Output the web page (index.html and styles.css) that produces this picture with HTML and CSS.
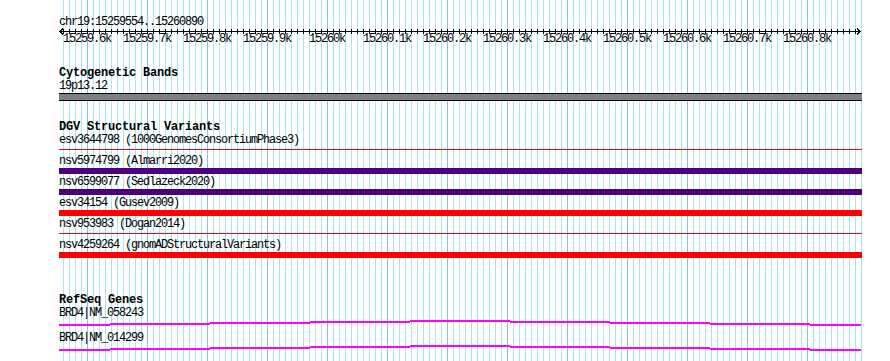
FILE: index.html
```html
<!DOCTYPE html>
<html>
<head>
  <title>chr19:15259554..15260890</title>
  <link rel="stylesheet" href="styles.css">
</head>
<body>
  <div class="browser">
    <!-- grid: one line every 10 bp, darker every 100 bp -->
    <svg class="grid" width="803" height="361" shape-rendering="crispEdges">
      <line x1="0" y1="180.5" x2="803" y2="180.5" stroke="#a6e8ee" stroke-width="361" stroke-dasharray="1 5" stroke-dashoffset="2"/>
      <line x1="0" y1="180.5" x2="803" y2="180.5" stroke="#7cc4ec" stroke-width="361" stroke-dasharray="1 59" stroke-dashoffset="32"/>
    </svg>

    <div class="line">chr19:15259554..15260890</div>
    <svg class="axis" width="803" height="7" shape-rendering="crispEdges">
      <line x1="0" y1="3.5" x2="802" y2="3.5" stroke="#000"/>
      <line x1="0" y1="3.5" x2="802" y2="3.5" stroke="#000" stroke-width="5" stroke-dasharray="1 5" stroke-dashoffset="2"/>
      <polyline points="4,0.5 1,3.5 4,6.5" fill="none" stroke="#000"/>
      <polyline points="798,0.5 801,3.5 798,6.5" fill="none" stroke="#000"/>
    </svg>
    <div class="ruler-labels">
      <span>15259.6k</span>
      <span>15259.7k</span>
      <span>15259.8k</span>
      <span>15259.9k</span>
      <span>15260k</span>
      <span>15260.1k</span>
      <span>15260.2k</span>
      <span>15260.3k</span>
      <span>15260.4k</span>
      <span>15260.5k</span>
      <span>15260.6k</span>
      <span>15260.7k</span>
      <span>15260.8k</span>
    </div>

    <div class="track-title cyto">Cytogenetic Bands</div>
    <div class="line tight band-name">19p13.12</div>
    <div class="band"></div>

    <div class="track-title dgv">DGV Structural Variants</div>
    <div class="features">
      <div class="feat">
        <div class="line tight">esv3644798 (1000GenomesConsortiumPhase3)</div>
        <div class="bar thin red"></div>
      </div>
      <div class="feat">
        <div class="line tight">nsv5974799 (Almarri2020)</div>
        <div class="bar purple"></div>
      </div>
      <div class="feat">
        <div class="line tight">nsv6599077 (Sedlazeck2020)</div>
        <div class="bar purple"></div>
      </div>
      <div class="feat">
        <div class="line tight">esv34154 (Gusev2009)</div>
        <div class="bar red"></div>
      </div>
      <div class="feat">
        <div class="line tight">nsv953983 (Dogan2014)</div>
        <div class="bar thin red"></div>
      </div>
      <div class="feat">
        <div class="line tight">nsv4259264 (gnomADStructuralVariants)</div>
        <div class="bar red"></div>
      </div>
    </div>

    <div class="track-title refseq">RefSeq Genes</div>
    <div class="line tight gene-name">BRD4|NM_058243</div>
    <div class="gene">
      <div class="seg" style="width:51px;margin-top:4px"></div>
      <div class="seg" style="width:100px;margin-top:3px"></div>
      <div class="seg" style="width:100px;margin-top:2px"></div>
      <div class="seg" style="width:100px;margin-top:1px"></div>
      <div class="seg" style="width:100px;margin-top:0px"></div>
      <div class="seg" style="width:100px;margin-top:1px"></div>
      <div class="seg" style="width:100px;margin-top:2px"></div>
      <div class="seg" style="width:100px;margin-top:3px"></div>
      <div class="seg" style="width:51px;margin-top:4px"></div>
    </div>
    <div class="line tight gene-name second">BRD4|NM_014299</div>
    <div class="gene">
      <div class="seg" style="width:51px;margin-top:4px"></div>
      <div class="seg" style="width:100px;margin-top:3px"></div>
      <div class="seg" style="width:100px;margin-top:2px"></div>
      <div class="seg" style="width:100px;margin-top:1px"></div>
      <div class="seg" style="width:100px;margin-top:0px"></div>
      <div class="seg" style="width:100px;margin-top:1px"></div>
      <div class="seg" style="width:100px;margin-top:2px"></div>
      <div class="seg" style="width:100px;margin-top:3px"></div>
      <div class="seg" style="width:51px;margin-top:4px"></div>
    </div>
  </div>
</body>
</html>
```

FILE: styles.css
```css
body {
  margin: 0;
  background-color: #fff;
  overflow: hidden;
}

.browser {
  position: relative;
  isolation: isolate;
  box-sizing: border-box;
  width: 803px;
  height: 361px;
  margin-left: 59px;
  padding-top: 16px;
  font-family: "Liberation Mono", monospace;
  font-size: 12px;
  line-height: 13px;
  letter-spacing: -1.2px;
  color: #000;
}

.grid {
  position: absolute;
  top: 0;
  left: 0;
  z-index: -1;
}

.line {
  height: 13px;
  white-space: nowrap;
}

.line.tight {
  height: 11px;
  line-height: 11px;
}

.axis {
  display: block;
  margin-top: -1px;
}

.ruler-labels {
  display: flex;
  height: 13px;
  margin-top: -2px;
  margin-left: -2px;
}

.ruler-labels span {
  flex: 0 0 60px;
  text-align: center;
}

.track-title {
  height: 11px;
  line-height: 11px;
  font-weight: bold;
  letter-spacing: -0.2px;
  white-space: nowrap;
}

.cyto {
  margin-top: 22px;
}

.band-name {
  margin-top: 2px;
}

.band {
  height: 6px;
  margin-top: 1px;
  background-color: #808080;
  border-top: 1px solid #000;
  border-bottom: 1px solid #000;
}

.dgv {
  margin-top: 21px;
}

.features {
  margin-top: 2px;
}

.feat {
  height: 21px;
}

.feat .line {
  height: 12px;
}

.bar {
  height: 6px;
}

.bar.thin {
  height: 1px;
  margin-top: 2px;
}

.red {
  background-color: #ff0000;
}

.purple {
  background-color: #4b0082;
}

.refseq {
  margin-top: 34px;
}

.gene-name {
  margin-top: 2px;
}

.gene-name.second {
  margin-top: 7px;
}

.gene {
  display: flex;
  align-items: flex-start;
  height: 6px;
  margin-top: 1px;
}

.seg {
  flex: none;
  height: 2px;
  background-color: #ff00ff;
}
```
